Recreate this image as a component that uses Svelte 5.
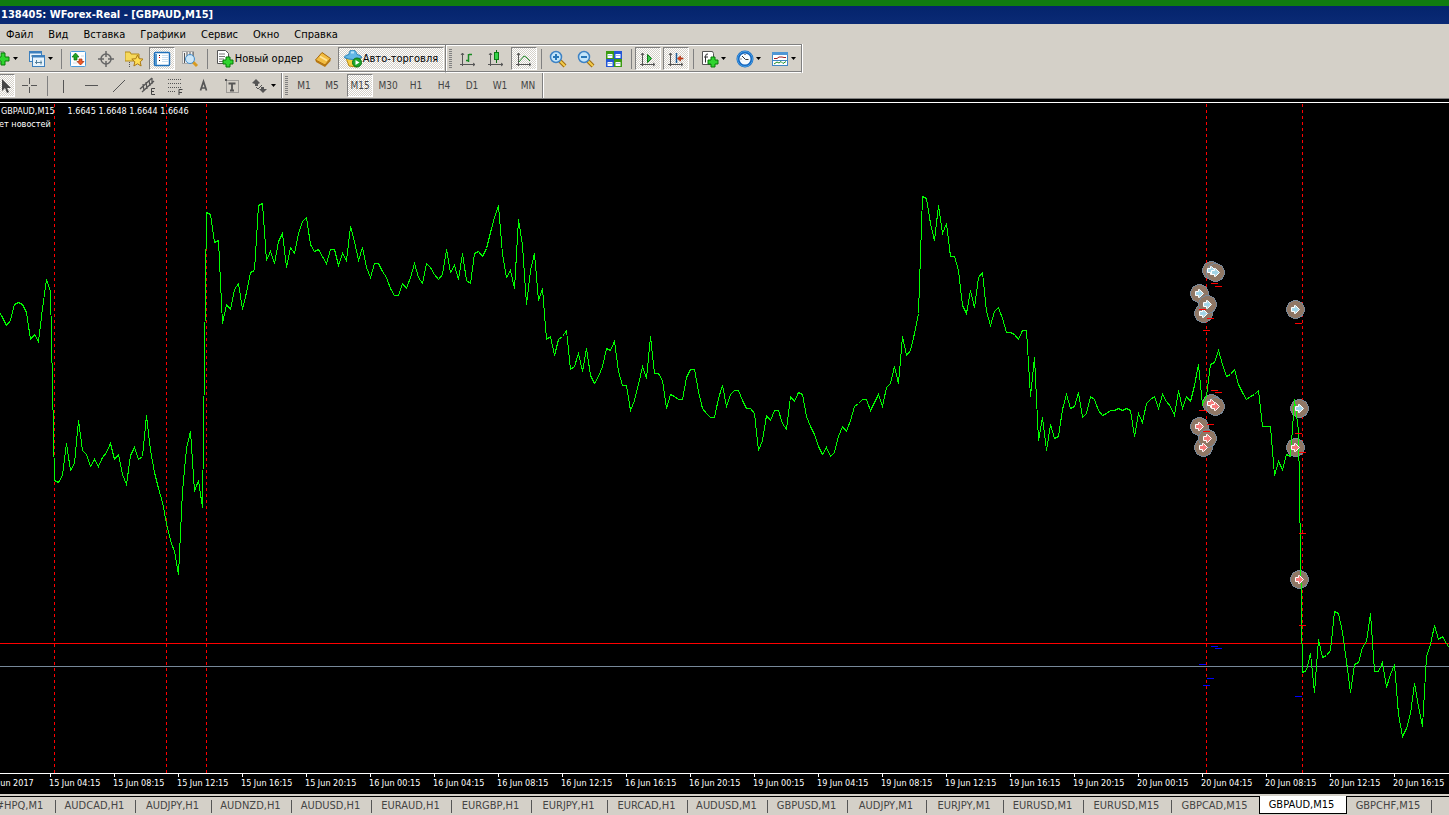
<script lang="ts">
  type Tool = { icon?: string; title: string; text?: string; drop?: boolean; pressed?: boolean; sep?: boolean; wide?: boolean };

  const menu = ['Файл', 'Вид', 'Вставка', 'Графики', 'Сервис', 'Окно', 'Справка'];

  const plus = '<path d="M10 7h4v3h3v4h-3v3h-4v-3H7v-4h3z" fill="#2fd52f" stroke="#087a08"/>';
  const axes = '<path d="M3.500 3v13M1 14.500h15M2 5l1.500-2L5 5M14 13l2 1.500-2 1.500" fill="none" stroke="#555"/>';
  const glass = '<path d="M11 11l5 5" stroke="#a06c10" stroke-width="4"/><path d="M11 11l5 5" stroke="#f3cd4c" stroke-width="2"/><circle cx="7" cy="7" r="5.500" fill="#c4e6fa" stroke="#3f83c4" stroke-width="1.500"/>';

  const icons: Record<string, string> = {
    newChart: '<path d="M2 2h9v11H2z" fill="#fff" stroke="#666"/><path d="M8 3h4v4h4v4h-4v4H8v-4H4V7h4z" fill="#2fd52f" stroke="#087a08"/>',
    profiles: '<rect x="1.500" y="1.500" width="12" height="10" fill="#e7f3fc" stroke="#3c7fbd"/><path d="M1 2.500h13" stroke="#3c7fbd" stroke-width="2"/><rect x="4.500" y="5.500" width="12" height="11" fill="#e7f3fc" stroke="#3c7fbd"/><path d="M4 6.500h13" stroke="#3c7fbd" stroke-width="2"/><path d="M3 6h2M7 12.500h7M8.500 10v4M13 10.500v4" stroke="#55809c"/>',
    market: '<rect x="1.500" y="1.500" width="15" height="15" rx="1" fill="#fff" stroke="#4a9bdc"/><path d="M4 5h5M4 13h4M12 6h3" stroke="#cfdbe6"/><path d="M6.500 3l3.500 4H8v3H5V7H3z" fill="#1fa51f" stroke="#0a6f0a" stroke-width=".7"/><path d="M11.500 15L8 11.500h2V9h3v2.500h2z" fill="#f05a28" stroke="#a02c0c" stroke-width=".7"/>',
    cross: '<circle cx="9" cy="9" r="5" fill="none" stroke="#666" stroke-width="1.500"/><path d="M9 1v6M9 11v6M1 9h6M11 9h6" stroke="#666" stroke-width="1.500"/>',
    navigator: '<path d="M0 2h5l1 2h8v7H0z" fill="#f6d95b" stroke="#b48b1c"/><path d="M4.500 12v5" stroke="#555" stroke-dasharray="1 1"/><path d="M12.500 5l1.700 3.700 4 .4-3 2.700.9 4.200-3.600-2.200L8.900 16l.9-4.200-3-2.700 4-.4z" fill="#ffde55" stroke="#ab7814"/>',
    terminal: '<rect x="1.500" y="2.500" width="15" height="13" rx="1" fill="#fff" stroke="#1e70bb" stroke-width="1.500"/><path d="M3 4v11" stroke="#5397ce" stroke-width="2"/><path d="M6 5.500h1M6 10.500h1" stroke="#111"/><path d="M6 7.500h1" stroke="#f00"/><path d="M9 5.500h6M9 7.500h6M9 9.500h6M9 11.500h6" stroke="#c9def0"/>',
    tester: '<rect x="1.500" y="1.500" width="11" height="12" fill="#eee" stroke="#aaa"/><path d="M3.500 3v10M6 2v5M9 2v4M12 2v5" stroke="#555"/><path d="M12 12l4 4" stroke="#d89b20" stroke-width="3"/><circle cx="9" cy="9" r="4.500" fill="#c8e6fa" fill-opacity=".9" stroke="#458ecb"/>',
    order: '<path d="M1.500 .500h8l3 3v10h-11z" fill="#fff" stroke="#555"/><path d="M3 4h6M3 6.500h6M3 9h5M3 11.500h4" stroke="#777"/>' + plus,
    book: '<path d="M1.500 10L8 2.500l8.500 6-5.500 6.500z" fill="#f2bd42" stroke="#a8690c"/><path d="M1.500 10l9.500 5 5.500-6.500v2.500L11 17l-9-5z" fill="#b8770f"/><path d="M6 6.500l7 4" stroke="#ffe49a" stroke-width="2"/>',
    auto: '<path d="M2 8l3 8 8 1 4-9z" fill="#f6cf47" stroke="#b98a15"/><path d="M0 7.500q9 4 18 0-1-2.500-5-3Q12 0 8.500 0T5 4.500Q1 5 0 7.500z" fill="#62b7e6" stroke="#2c83b8"/><path d="M7 2.500h3" stroke="#b8e3fa" stroke-width="2"/><circle cx="13" cy="12.500" r="4.500" fill="#1fa82c" stroke="#087514"/><path d="M11.500 10l4 2.500-4 2.500z" fill="#fff"/>',
    bars: axes + '<path d="M9.500 4v8M9 10.500H7M10 4.500h3" stroke="#178a22" stroke-width="1.500" fill="none"/>',
    candles: axes + '<path d="M9.500 0v13" stroke="#0b6b12"/><rect x="7.500" y="2.500" width="4" height="7" fill="#35d348" stroke="#0b7a14"/>',
    line: axes + '<path d="M4 12l5-6 2 1 4 4" stroke="#218c2a" fill="none"/>',
    zoomIn: glass + '<path d="M4 7h6M7 4v6" stroke="#2877b8" stroke-width="2"/>',
    zoomOut: glass + '<path d="M4 7h6" stroke="#2877b8" stroke-width="2"/>',
    tile: '<path d="M1 1h8v8H1z" fill="#3b9a12"/><path d="M9 1h8v8H9z" fill="#2457d6"/><path d="M1 9h8v8H1z" fill="#2457d6"/><path d="M9 9h8v8H9z" fill="#3b9a12"/><path d="M2.500 4h5v4h-5zM10.500 4h5v4h-5zM2.500 12h5v4h-5zM10.500 12h5v4h-5z" fill="#fff"/><path d="M3 5.500h4M11 5.500h4M3 13.500h4M11 13.500h4" stroke="#9fbfdf"/>',
    scroll: axes + '<path d="M8.500 4.500l4 4-4 4z" fill="#35c948" stroke="#0b7a14"/>',
    shift: axes + '<path d="M9.500 3v10" stroke="#1b5d9a" stroke-width="1.500"/><path d="M10.500 8.500l3-2.500v2H16v1h-2.500v2z" fill="#e0421a" stroke="#a02c0c" stroke-width=".7"/>',
    indicators: '<path d="M1.500 1.500h10l1 2v11h-11z" fill="#fff" stroke="#555"/><path d="M7 4q-2.500-.5-2.500 2.500v6M3 7h4" stroke="#333" fill="none"/>' + plus,
    clock: '<circle cx="9" cy="9" r="7" fill="#f5fafe" stroke="#1567bf" stroke-width="3"/><circle cx="9" cy="9" r="7.500" fill="none" stroke="#49a2e8"/><path d="M9.500 9.500L6 6M9.500 9.500h3M9 4v1M4.500 9h1" stroke="#333" fill="none"/>',
    templates: '<rect x="1.500" y="2.500" width="15" height="13" fill="#fff" stroke="#4086c5"/><path d="M1 3.500h16" stroke="#4f96d4" stroke-width="3"/><path d="M2 10.500h14" stroke="#4086c5"/><path d="M3 8.500h3l2-1.500h3l2 .5h2" stroke="#a02020" fill="none"/><path d="M3 14l3-2 2 1 2-1.500 2 2 3-2" stroke="#1b8b2a" fill="none"/>',
    cursor: '<path d="M9 2v12l3-3 2 5 2-1-2-4h4z" fill="#444"/>',
    crosshair: '<path d="M8.500 1v6M8.500 10v6M1 8.500h6M10 8.500h6" stroke="#555"/>',
    vline: '<path d="M8.500 3v13" stroke="#555"/>',
    hline: '<path d="M2 8.500h13" stroke="#555"/>',
    trend: '<path d="M2 15L14 3" stroke="#555"/>',
    channel: '<path d="M1 12L13 1M3 15L15 4M4 7l1 7M7 5l1 7M10 3l1 6M13 1v6" stroke="#555" stroke-width="1.300"/><path d="M16 11.500h-3.500v6H16M12.500 14.500H15" fill="none" stroke="#444"/>',
    fibo: '<path d="M1 2.500h13M1 6.500h13M1 10.500h13M1 14.500h8" stroke="#555" stroke-dasharray="1 1"/><path d="M15.500 12.500h-3.500v5.500M12 15.500h3" fill="none" stroke="#444"/>',
    text: '<path d="M5.500 13.500l3-9 3 9M6.500 11h4" fill="none" stroke="#555" stroke-width="1.700"/>',
    label: '<rect x="3.500" y="3.500" width="12" height="12" fill="none" stroke="#666" stroke-dasharray="1 1"/><path d="M5.500 6.500h7M9 7v7M7 13.500h4" stroke="#555" stroke-width="1.800"/><path d="M2 2h2v2H2z" fill="#555"/>',
    arrows: '<path d="M5 2l4 4-2 1v2H4V7L1 6z" fill="#555"/><path d="M12 16l-4-4h2v-2h3v2h3z" fill="#555"/><path d="M5 10l2 2 4-4" stroke="#555" fill="none"/>'
  };

  const standard: Tool[] = [
    { icon: 'newChart', title: 'Новый график', drop: true },
    { icon: 'profiles', title: 'Профили', drop: true },
    { icon: 'market', title: 'Обзор рынка', sep: true },
    { icon: 'cross', title: 'Окно данных' },
    { icon: 'navigator', title: 'Навигатор' },
    { icon: 'terminal', title: 'Терминал', pressed: true },
    { icon: 'tester', title: 'Тестер стратегий' },
    { icon: 'order', title: 'Новый ордер', text: 'Новый ордер', sep: true },
    { icon: 'book', title: 'MetaEditor' },
    { icon: 'auto', title: 'Авто-торговля', text: 'Авто-торговля', pressed: true, wide: true }
  ];

  const charts: Tool[] = [
    { icon: 'bars', title: 'Бары' },
    { icon: 'candles', title: 'Свечи' },
    { icon: 'line', title: 'Линия', pressed: true },
    { icon: 'zoomIn', title: 'Увеличить', sep: true },
    { icon: 'zoomOut', title: 'Уменьшить' },
    { icon: 'tile', title: 'Мозаика' },
    { icon: 'scroll', title: 'Автопрокрутка', pressed: true, sep: true },
    { icon: 'shift', title: 'Сдвиг графика', pressed: true },
    { icon: 'indicators', title: 'Индикаторы', drop: true, sep: true },
    { icon: 'clock', title: 'Периоды', drop: true },
    { icon: 'templates', title: 'Шаблоны', drop: true }
  ];

  const drawing: Tool[] = [
    { icon: 'cursor', title: 'Курсор', pressed: true },
    { icon: 'crosshair', title: 'Перекрестие' },
    { icon: 'vline', title: 'Вертикальная линия', sep: true },
    { icon: 'hline', title: 'Горизонтальная линия' },
    { icon: 'trend', title: 'Трендовая линия' },
    { icon: 'channel', title: 'Канал' },
    { icon: 'fibo', title: 'Фибоначчи' },
    { icon: 'text', title: 'Текст' },
    { icon: 'label', title: 'Текстовая метка' },
    { icon: 'arrows', title: 'Стрелки', drop: true }
  ];

  const periods = ['M1', 'M5', 'M15', 'M30', 'H1', 'H4', 'D1', 'W1', 'MN'];
  let period = $state('M15');

  // one close every 4px, measured down from the top of the chart
  const closes = [
    207, 214, 222, 217, 201, 199, 201, 209, 236, 231, 238, 205, 176, 188, 377, 379, 372, 340, 367, 360, 317,
    347, 351, 363, 356, 363, 354, 349, 340, 356, 351, 371, 381, 352, 344, 356, 353, 312, 347, 369, 385,
    399, 420, 437, 448, 471, 388, 345, 328, 388, 377, 404, 109, 111, 139, 137, 220, 201, 206, 186, 180,
    206, 189, 169, 167, 102, 100, 157, 148, 160, 138, 130, 164, 144, 150, 130, 118, 114, 141, 148, 146,
    153, 160, 146, 146, 162, 150, 157, 123, 138, 157, 144, 164, 174, 160, 160, 168, 174, 185, 192, 192,
    180, 185, 174, 160, 174, 180, 160, 164, 171, 176, 171, 146, 169, 162, 176, 150, 177, 180, 150, 148,
    153, 145, 129, 114, 102, 151, 174, 167, 185, 116, 142, 201, 167, 150, 197, 185, 236, 233, 252, 236,
    233, 227, 266, 263, 250, 268, 245, 272, 280, 273, 263, 245, 247, 238, 268, 282, 282, 307, 297, 281,
    263, 275, 233, 270, 270, 277, 305, 291, 293, 296, 296, 274, 266, 266, 288, 305, 310, 314, 314, 295,
    282, 303, 291, 287, 287, 297, 305, 305, 310, 347, 337, 312, 317, 307, 307, 320, 326, 293, 298, 289,
    291, 313, 323, 331, 343, 351, 344, 353, 349, 333, 323, 328, 317, 303, 300, 296, 296,
    307, 299, 291, 303, 284, 280, 263, 280, 233, 252, 247, 230, 210, 93, 95, 120, 137, 102, 130, 120,
    153, 153, 167, 202, 210, 187, 204, 174, 169, 208, 222, 208, 204, 215, 229, 229, 231, 236, 227, 227,
    293, 254, 337, 314, 347, 321, 335, 333, 306, 291, 305, 303, 289, 314, 310, 293, 296, 307, 312, 310,
    307, 307, 305, 307, 305, 307, 333, 310, 319, 300, 296, 293, 305, 291, 298, 303, 312, 287, 305, 293,
    298, 282, 261, 301, 292, 261, 259, 247, 261, 273, 271, 266, 281, 289, 296, 293, 291, 287, 323, 323,
    323, 372, 358, 366, 351, 353, 296, 327, 569, 567, 550, 589, 536, 554, 552, 547, 508, 510, 529, 558,
    589, 561, 559, 544, 538, 510, 568, 568, 559, 584, 571, 561, 611, 633, 625, 610, 580, 603, 623,
    553, 541, 522, 536, 533, 540, 546
  ];
  const points = closes.map((y, i) => `${i * 4 - 2},${y}`).join(' ');

  const newsLines = [54, 166, 206, 1206, 1302];

  const signals = [
    [1211, 167, 'buy'], [1215, 169, 'buy'], [1199, 190, 'buy'], [1203, 210, 'buy'], [1207, 201, 'buy'],
    [1295, 206, 'buy'], [1299, 305, 'buy'], [1211, 300, 'sell'], [1215, 303, 'sell'], [1199, 323, 'sell'],
    [1203, 344, 'sell'], [1207, 335, 'sell'], [1295, 344, 'sell'], [1299, 476, 'sell']
  ] as const;

  const stops = [
    [1210, 180], [1214, 183], [1198, 206], [1206, 215], [1202, 227], [1294, 220], [1210, 287], [1214, 289],
    [1198, 307], [1206, 321], [1202, 328], [1294, 330], [1298, 349], [1298, 430], [1298, 522]
  ];
  const takes = [[1210, 543], [1214, 545], [1198, 561], [1206, 575], [1202, 582], [1294, 593]];

  const times = [
    '15 Jun 2017', '15 Jun 04:15', '15 Jun 08:15', '15 Jun 12:15', '15 Jun 16:15', '15 Jun 20:15',
    '16 Jun 00:15', '16 Jun 04:15', '16 Jun 08:15', '16 Jun 12:15', '16 Jun 16:15', '16 Jun 20:15',
    '19 Jun 00:15', '19 Jun 04:15', '19 Jun 08:15', '19 Jun 12:15', '19 Jun 16:15', '19 Jun 20:15',
    '20 Jun 00:15', '20 Jun 04:15', '20 Jun 08:15', '20 Jun 12:15', '20 Jun 16:15'
  ];

  const tabs: [string, number][] = [
    ['#HPQ,M1', 70], ['AUDCAD,H1', 80], ['AUDJPY,H1', 76], ['AUDNZD,H1', 80], ['AUDUSD,H1', 80],
    ['EURAUD,H1', 80], ['EURGBP,H1', 80], ['EURJPY,H1', 76], ['EURCAD,H1', 80], ['AUDUSD,M1', 80],
    ['GBPUSD,M1', 80], ['AUDJPY,M1', 79], ['EURJPY,M1', 77], ['EURUSD,M1', 80], ['EURUSD,M15', 88],
    ['GBPCAD,M15', 88], ['GBPAUD,M15', 88], ['GBPCHF,M15', 85]
  ];
  let activeTab = $state('GBPAUD,M15');
</script>

{#snippet tools(list: Tool[])}
  {#each list as t}
    {#if t.sep}<span class="sep"></span>{/if}
    <button class="tool" class:drop={t.drop} class:pressed={t.pressed} class:labelled={t.text} class:wide={t.wide} title={t.title} aria-label={t.title}>
      <svg class="icon" viewBox="0 0 18 18">{@html icons[t.icon ?? '']}</svg>
      {#if t.text}<span>{t.text}</span>{/if}
      {#if t.drop}<svg class="caret" viewBox="0 0 5 3"><path d="M0 0h5L2.500 3z" /></svg>{/if}
    </button>
  {/each}
{/snippet}

<div class="app">
  <header class="title">138405: WForex-Real - [GBPAUD,M15]</header>

  <nav class="menu">
    {#each menu as m}
      <button>{m}</button>
    {/each}
  </nav>

  <div class="row">
    <div class="bar top cut">{@render tools(standard)}</div>
    <div class="bar top"><span class="grip"></span>{@render tools(charts)}</div>
  </div>

  <div class="row second">
    <div class="bar cut">{@render tools(drawing)}</div>
    <div class="bar">
      <span class="grip"></span>
      {#each periods as p}
        <button class="tool period" class:pressed={p === period} onclick={() => (period = p)}>{p}</button>
      {/each}
    </div>
  </div>

  <main>
    <div class="plot">
      <svg class="chart">
        <g transform="translate(.5 .5)" shape-rendering="crispEdges">
          {#each newsLines as x}
            <line x1={x} x2={x} y1="0" y2="100%" class="news" />
          {/each}
          <line x1="-1" x2="100%" y1="540" y2="540" stroke="#f00" />
          <line x1="-1" x2="100%" y1="563" y2="563" stroke="#778899" />
          {#each signals as [x, y]}
            <circle cx={x} cy={y} r="9" fill="#8f7765" stroke="#778899" />
          {/each}
          <polyline {points} fill="none" stroke="#0f0" />
        </g>
        <g transform="translate(.5 .5)">
          {#each signals as [x, y, side]}
            <path transform="translate({x} {y})" d="M-4-2H-1V-4H0L4 0 0 4H-1V2H-4z" stroke="#fff" fill={side === 'buy' ? '#add8e6' : '#f08080'} />
            <path transform="translate({x} {y})" d="M0-2L2 0 0 2V1H-3V-1H0z" fill={side === 'buy' ? '#9fd3e8' : '#f87878'} />
          {/each}
        </g>
        <g transform="translate(.5 .5)" shape-rendering="crispEdges">
          {#each stops as [x, y]}
            <path d="M{x} {y}h7" stroke="#f00" />
          {/each}
          {#each takes as [x, y]}
            <path d="M{x} {y}h7" stroke="#00f" />
          {/each}
        </g>
      </svg>
      <div class="quote">
        <p>GBPAUD,M15&nbsp;&nbsp;&nbsp;&nbsp; 1.6645 1.6648 1.6644 1.6646</p>
        <p class="status">Нет новостей</p>
      </div>
    </div>
    <div class="axis">
      {#each times as t}
        <span>{t}</span>
      {/each}
    </div>
  </main>

  <div class="tabs" role="tablist">
    {#each tabs as [name, width]}
      <button role="tab" aria-selected={name === activeTab} class:active={name === activeTab} style="width: {width}px" onclick={() => (activeTab = name)}>{name}</button>
    {/each}
  </div>
</div>

<style>
  :global(body) { margin: 0; overflow: hidden; }
  .app {
    display: flex;
    flex-direction: column;
    height: 100vh;
    overflow: hidden;
    background: #d4d0c8;
    color: #000;
    font-family: "DejaVu Sans Condensed", "DejaVu Sans", sans-serif;
    font-size: 11px;
  }
  button {
    box-sizing: border-box;
    padding: 0;
    border: 0;
    background: none;
    color: inherit;
    font: inherit;
    white-space: nowrap;
  }
  .title {
    flex: none;
    height: 18px;
    padding-left: 1px;
    border-top: 6px solid #107c10;
    background: linear-gradient(#04246c, #0a2a75);
    color: #fff;
    font-weight: bold;
    line-height: 18px;
  }
  .menu {
    display: flex;
    flex: none;
    height: 20px;
  }
  .menu button { padding: 0 9px 0 6px; }

  .row {
    display: flex;
    flex: none;
    height: 29px;
  }
  .row.second { height: 25px; }
  .bar {
    display: flex;
    align-items: center;
    border-right: 1px solid #808080;
    box-shadow: 1px 0 #fff;
  }
  .bar.top {
    box-sizing: border-box;
    border-top: 1px solid #808080;
    border-bottom: 1px solid #fff;
    box-shadow: 1px 0 #fff, inset 0 1px #fff, inset 0 -1px #808080;
  }
  /* both bars run off the left edge of the window */
  .cut { margin-left: -12px; }
  .bar + .bar { padding-left: 3px; }
  .grip {
    width: 3px;
    height: 19px;
    margin-right: 2px;
    background: repeating-linear-gradient(#808080 0 1px, #d4d0c8 1px 2px);
  }
  .sep {
    width: 1px;
    height: 20px;
    margin: 0 2px 0 3px;
    background: #808080;
  }
  .tool {
    display: flex;
    align-items: center;
    justify-content: center;
    flex: none;
    width: 26px;
    height: 23px;
    margin: 0 1px;
  }
  .tool.drop {
    gap: 2px;
    width: 35px;
    margin: 0;
  }
  .tool.labelled {
    gap: 1px;
    width: 97px;
  }
  .tool.wide { width: 106px; }
  .tool.pressed {
    border: 1px solid;
    border-color: #808080 #fff #fff #808080;
    background: repeating-conic-gradient(#fff 0 25%, #d4d0c8 0 50%) 0 0 / 2px 2px;
  }
  .period {
    color: #444;
    font-size: 10px;
  }
  .icon { width: 18px; height: 18px; flex: none; }
  .caret { width: 5px; height: 3px; flex: none; }

  main {
    display: flex;
    flex: 1;
    flex-direction: column;
    min-height: 0;
    border-top: 1px solid #808080;
    background: #000;
    color: #fff;
    font-size: 9px;
  }
  .plot {
    position: relative;
    flex: 1;
    min-height: 0;
    margin-top: 3px;
    border-top: 1px solid #fff;
  }
  .chart {
    display: block;
    width: 100%;
    height: 100%;
  }
  .news { stroke: #f00; stroke-dasharray: 3 3; }
  .quote {
    position: absolute;
    top: 2px;
    left: 1px;
  }
  .quote p {
    margin: 0;
    line-height: 13px;
    white-space: pre;
  }
  .quote .status { margin-left: -8px; }
  .axis {
    display: flex;
    flex: none;
    height: 20px;
    margin-left: -14px;
    border-top: 1px solid #fff;
    overflow: hidden;
  }
  .axis span {
    flex: none;
    width: 64px;
    line-height: 18px;
    text-indent: -1px;
    background: linear-gradient(#fff, #fff) 0 0 / 1px 3px no-repeat;
    white-space: nowrap;
  }

  .tabs {
    display: flex;
    flex: none;
    height: 21px;
    box-sizing: border-box;
    padding: 2px 0 1px;
    margin-left: -14px;
    background: linear-gradient(#d4d0c8 0 2px, #000 2px 3px, #d4d0c8 3px);
    color: #444;
    overflow: hidden;
  }
  .tabs button {
    flex: none;
    padding-right: 3px;
    background: linear-gradient(#555, #555) 100% 4px / 1px 13px no-repeat;
  }
  .tabs button.active {
    margin-left: -1px;
    border: solid #000;
    border-width: 0 1px 1px;
    background: #fff;
    color: #000;
  }
</style>
